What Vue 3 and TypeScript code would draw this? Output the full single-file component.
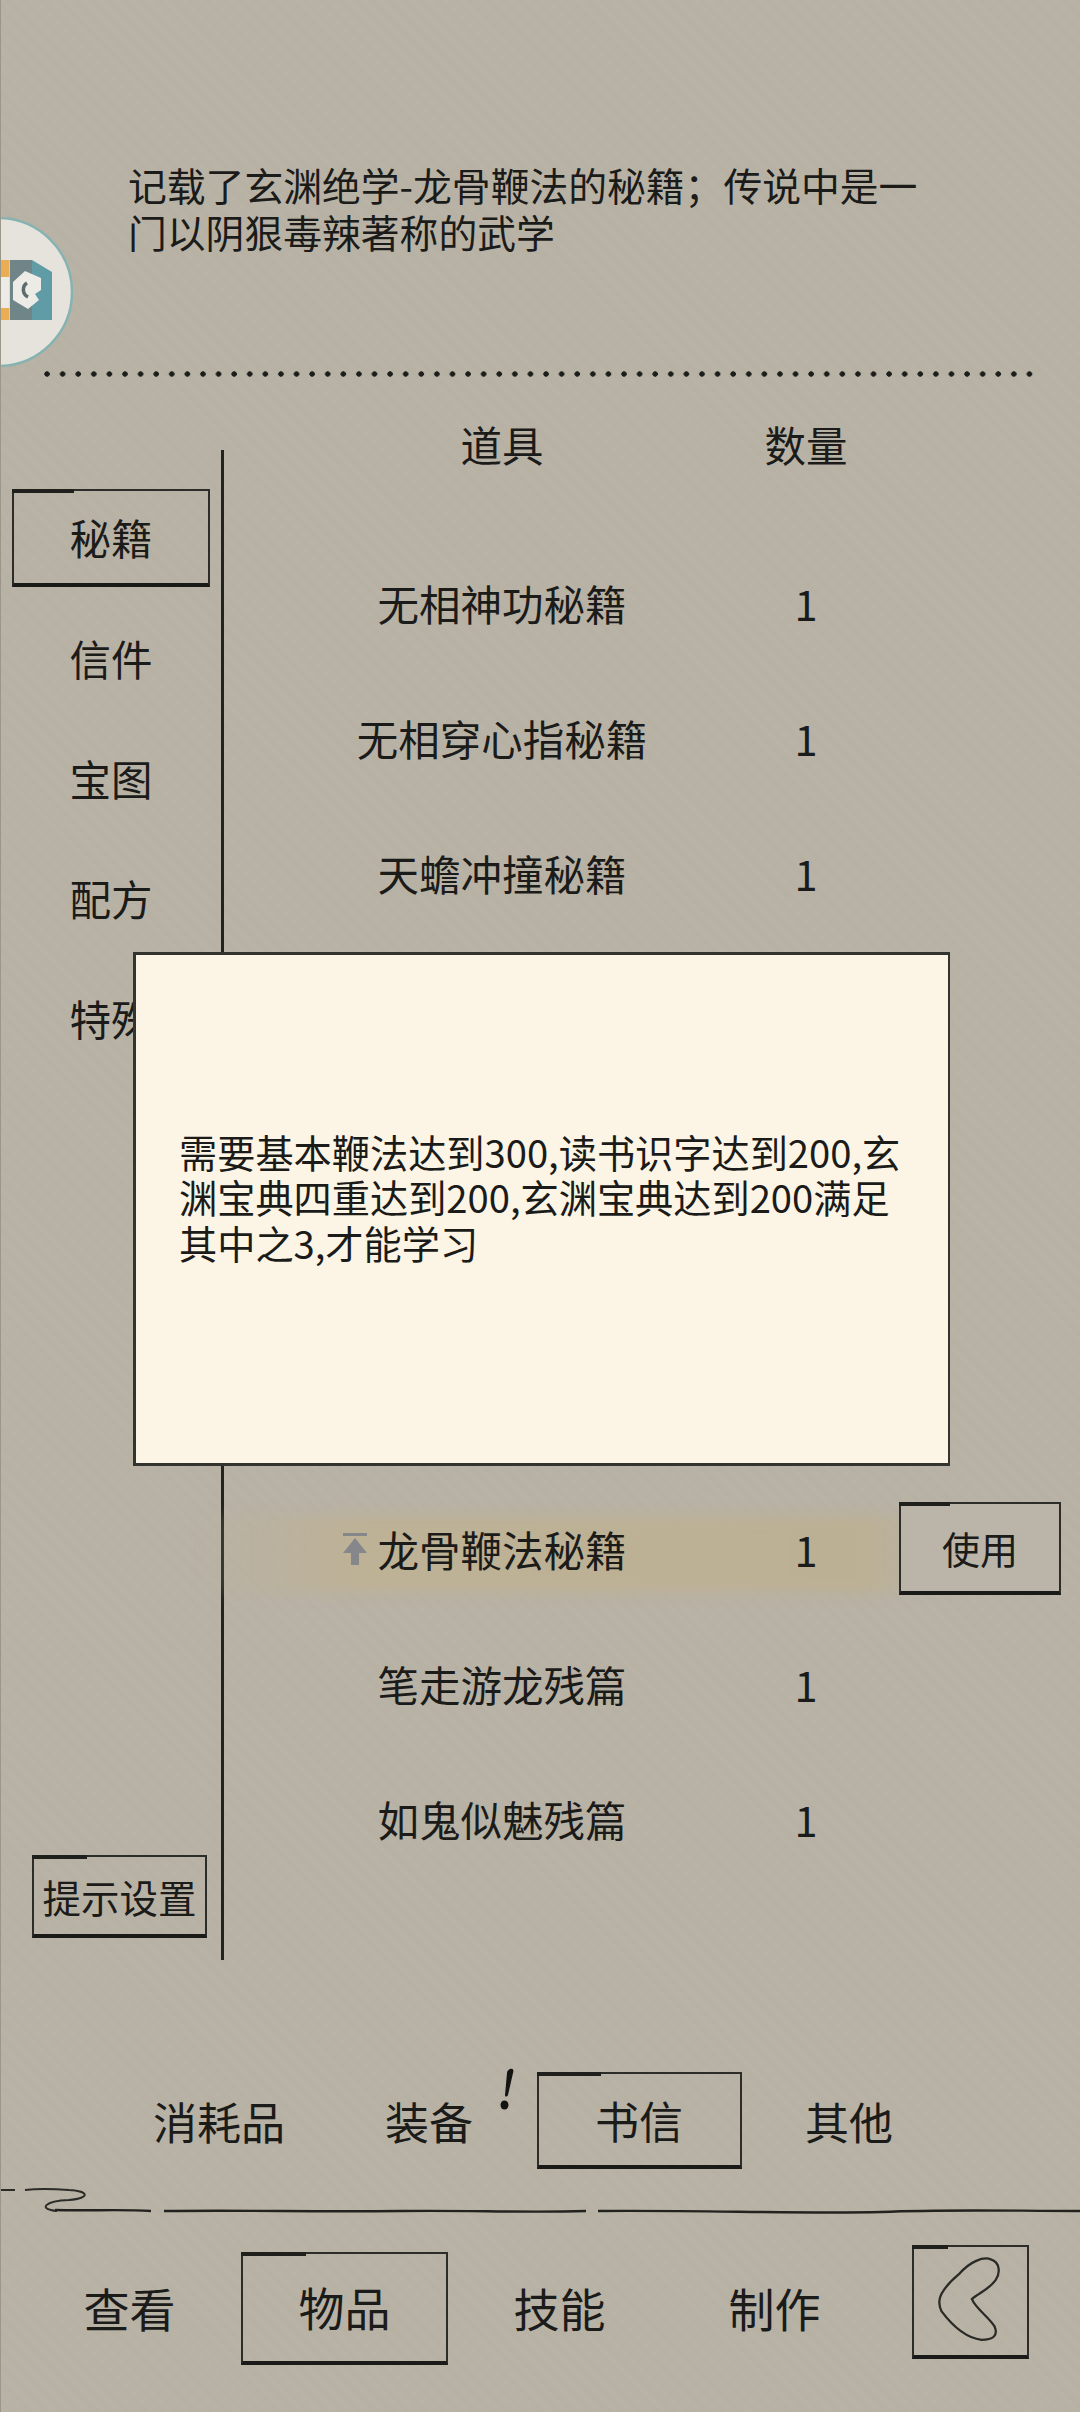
<script setup lang="ts">
interface Item {
  name: string
  count: number
  current?: boolean
}

const categories = ['秘籍', '信件', '宝图', '配方', '特殊']

const topItems: Item[] = [
  { name: '无相神功秘籍', count: 1 },
  { name: '无相穿心指秘籍', count: 1 },
  { name: '天蟾冲撞秘籍', count: 1 }
]

const bottomItems: Item[] = [
  { name: '龙骨鞭法秘籍', count: 1, current: true },
  { name: '笔走游龙残篇', count: 1 },
  { name: '如鬼似魅残篇', count: 1 }
]

const subTabs = ['消耗品', '装备', '书信', '其他']
const mainTabs = ['查看', '物品', '技能', '制作']
</script>

<template>
  <div class="page">
    <section class="intro">
      <p class="desc">记载了玄渊绝学-龙骨鞭法的秘籍；传说中是一门以阴狠毒辣著称的武学</p>
    </section>
    <div class="dots"></div>

    <main class="body">
      <aside class="side">
        <div
          v-for="(c, i) in categories"
          :key="c"
          class="cat"
          :class="{ sketch: i === 0 }"
        >{{ c }}</div>
        <button class="hint sketch">提示设置</button>
      </aside>

      <section class="list">
        <div class="list-head">
          <span class="col-name">道具</span>
          <span class="col-count">数量</span>
        </div>
        <div class="rows">
          <div v-for="item in topItems" :key="item.name" class="row">
            <span class="col-name">{{ item.name }}</span>
            <span class="col-count">{{ item.count }}</span>
          </div>
          <div class="row-gap"></div>
          <div
            v-for="item in bottomItems"
            :key="item.name"
            class="row"
            :class="{ current: item.current }"
          >
            <span class="col-name">
              <span class="name-wrap">
                <svg v-if="item.current" class="up" viewBox="0 0 24 33">
                  <rect x="0" y="0" width="24" height="3" fill="#85878a" />
                  <path d="M12 5 L24 20 H16 V32 H8 V20 H0 Z" fill="#85878a" />
                </svg>
                {{ item.name }}
              </span>
            </span>
            <span class="col-count">{{ item.count }}</span>
            <button v-if="item.current" class="use sketch">使用</button>
          </div>
        </div>
      </section>
    </main>

    <nav class="sub-tabs">
      <div
        v-for="t in subTabs"
        :key="t"
        class="sub-tab"
        :class="{ sketch: t === '书信' }"
      >
        {{ t }}
        <svg v-if="t === '装备'" class="alert" viewBox="0 0 20 44">
          <path d="M13 1 C16 0 17 2 16 5 L11 27 C10 29 8 29 8 27 L10 5 C10 3 11 2 13 1 Z" fill="#141412" />
          <ellipse cx="7.5" cy="37" rx="4" ry="4.6" fill="#141412" />
        </svg>
      </div>
    </nav>

    <svg class="divider" viewBox="0 0 1080 30" preserveAspectRatio="none">
      <path d="M0 5 H14 M24 5 C40 3 55 4 68 5 C88 6 90 13 68 15 C44 16 36 24 56 26" fill="none" stroke="#2b2b28" stroke-width="2" />
      <path d="M54 25 C90 26 120 24 150 26 M163 26 C260 25 300 27 400 26 C470 25 520 28 585 26 M597 26 C700 25 800 29 880 27 C950 24 1010 26 1080 26" fill="none" stroke="#22221f" stroke-width="2.4" />
    </svg>

    <nav class="main-tabs">
      <div
        v-for="t in mainTabs"
        :key="t"
        class="main-tab"
        :class="{ sketch: t === '物品' }"
      >{{ t }}</div>
      <button class="back sketch">
        <svg viewBox="0 0 117 114">
          <path
            d="M46 29 C58 15 72 10 80 13 C90 16 90 28 85 35 C78 45 66 49 60 55 C64 65 78 74 84 84 C88 94 82 98 70 98 C54 96 40 84 28 68 C24 60 25 53 30 46 C34 40 40 34 46 29 Z"
            fill="none"
            stroke="#2a2a27"
            stroke-width="2.4"
          />
        </svg>
      </button>
    </nav>

    <div class="ball">
      <svg viewBox="0 0 150 150">
        <circle cx="75" cy="75" r="74" fill="#e6e3dc" stroke="#86b3b1" stroke-width="2.5" />
        <g transform="translate(77 -217)">
          <rect x="-3" y="260" width="12.5" height="60" fill="#e8ad55" />
          <rect x="-3" y="277" width="12.5" height="31" fill="#ecebe6" />
          <path d="M10 260 H32 V320 H10 Z" fill="#6f8587" />
          <path d="M32 260 L52 272 V320 H32 Z" fill="#5f9ca5" />
          <path d="M25 271 L41 278 V290 L35 294 L39 300 L28 309 L13 300 V282 Z" fill="#ecebe6" />
          <path d="M27 283 C22 286 22 294 28 297" fill="none" stroke="#5b6b6e" stroke-width="3.5" />
        </g>
      </svg>
    </div>

    <div class="modal">
      <p>需要基本鞭法达到300,读书识字达到200,玄渊宝典四重达到200,玄渊宝典达到200满足其中之3,才能学习</p>
    </div>
  </div>
</template>

<style scoped>
.page {
  position: relative;
  width: 1080px;
  height: 2412px;
  overflow: hidden;
  box-sizing: border-box;
  border-left: 1px solid #9a968a;
  background-color: #b9b3a6;
  background-image: repeating-linear-gradient(45deg, rgba(255, 255, 255, 0.02) 0 1px, rgba(0, 0, 0, 0.015) 1px 2px);
  color: #1b1b19;
  font-family: "Noto Sans CJK SC", "Noto Sans", sans-serif;
  font-size: 41.5px;
}

button {
  padding: 0;
  background: none;
  color: inherit;
  font: inherit;
}

.sketch {
  position: relative;
  box-sizing: border-box;
  border: 2px solid #2c2c29;
  border-bottom: 4px solid #1a1a18;
}

.sketch::before {
  content: "";
  position: absolute;
  left: -2px;
  top: -2px;
  width: 32%;
  height: 4px;
  background: #1f1f1c;
}

.intro {
  height: 371px;
  box-sizing: border-box;
  padding: 161px 0 0 127px;
}

.desc {
  width: 800px;
  margin: 0;
  font-size: 38.8px;
  line-height: 47px;
}

.dots {
  width: 992px;
  height: 6px;
  margin-left: 43px;
  background-image: radial-gradient(circle at 3px 3px, #1d1d1b 2.4px, transparent 3px);
  background-size: 15.6px 6px;
}

.body {
  display: flex;
  height: 1543px;
  margin-top: 40px;
}

.side {
  display: flex;
  flex-direction: column;
  align-items: center;
  flex: 0 0 223px;
  height: 1510px;
  margin-top: 33px;
  padding: 28px 0 22px;
  box-sizing: border-box;
  border-right: 3px solid #232320;
}

.cat {
  display: flex;
  align-items: center;
  justify-content: center;
  flex: 0 0 120px;
  width: 100%;
  box-sizing: border-box;
}

.cat.sketch {
  flex: 0 0 98px;
  width: 198px;
  margin: 11px 0;
}

.hint {
  width: 175px;
  height: 83px;
  margin-top: auto;
  margin-left: 17px;
  font-size: 38.5px;
}

.list {
  flex: 1;
}

.list-head {
  display: flex;
  align-items: center;
  height: 54px;
  margin-bottom: 64px;
}

.col-name {
  flex: 0 0 556px;
  text-align: center;
  white-space: nowrap;
}

.col-count {
  display: flex;
  justify-content: center;
  flex: 0 0 52px;
  min-width: 0;
  white-space: nowrap;
}

.row {
  position: relative;
  display: flex;
  align-items: center;
  height: 135px;
}

.row-gap {
  height: 541px;
}

.row span {
  position: relative;
}

.name-wrap {
  display: inline-block;
}

.up {
  position: absolute;
  left: -34px;
  top: 14px;
  width: 24px;
  height: 33px;
}

.current::before {
  content: "";
  position: absolute;
  left: -25px;
  top: 34px;
  width: 725px;
  height: 78px;
  background: linear-gradient(90deg, rgba(188, 177, 148, 0), #bdb196 22%, #bcb094 92%, rgba(188, 177, 148, 0));
  filter: blur(7px);
}

.use {
  width: 162px;
  height: 93px;
  margin-left: 67px;
  background: #bab5a8;
  font-size: 38px;
}

.sub-tabs {
  display: grid;
  grid-template-columns: repeat(4, 210px);
  height: 97px;
  margin-top: 112px;
  padding-left: 113px;
  font-size: 44px;
}

.sub-tab {
  position: relative;
  display: flex;
  align-items: center;
  justify-content: center;
  justify-self: center;
  width: 205px;
  height: 97px;
}

.alert {
  position: absolute;
  left: 170px;
  top: -4px;
  width: 20px;
  height: 44px;
}

.divider {
  display: block;
  width: 1080px;
  height: 30px;
  margin-top: 16px;
}

.main-tabs {
  display: grid;
  grid-template-columns: repeat(4, 215px) 117px;
  align-items: start;
  padding: 30px 0 0 21px;
  font-size: 46px;
}

.main-tab {
  display: flex;
  align-items: center;
  justify-content: center;
  justify-self: center;
  box-sizing: border-box;
  width: 207px;
  height: 113px;
  margin-top: 7px;
  padding-bottom: 4px;
}

.back {
  width: 117px;
  height: 114px;
  margin-left: 30px;
}

.back svg {
  display: block;
  width: 100%;
  height: 100%;
}

.ball {
  position: absolute;
  left: -78px;
  top: 217px;
  width: 150px;
  height: 150px;
}

.ball svg {
  display: block;
  width: 150px;
  height: 150px;
}

.modal {
  position: absolute;
  left: 132px;
  top: 952px;
  display: flex;
  align-items: center;
  width: 817px;
  height: 514px;
  box-sizing: border-box;
  padding: 0 41px 24px 43px;
  border: 3px solid #33332f;
  border-right-width: 2px;
  background: #fcf5e6;
}

.modal p {
  margin: 0;
  font-size: 38.2px;
  line-height: 45.5px;
}
</style>

<style>
html,
body {
  margin: 0;
  background: #b9b3a6;
}
</style>
